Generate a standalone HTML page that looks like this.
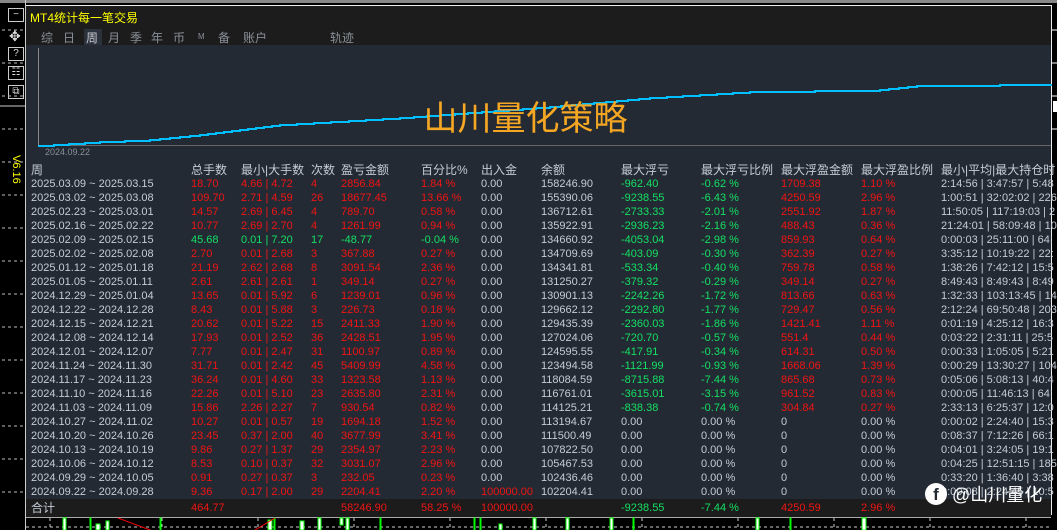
<!DOCTYPE html><html><head><meta charset="utf-8"><style>
*{margin:0;padding:0;box-sizing:border-box}
body{width:1057px;height:530px;background:#000;position:relative;overflow:hidden;font-family:"Liberation Sans","Noto Sans CJK SC",sans-serif;font-size:11px;color:#c4ccd6}
.abs{position:absolute}
.r{color:#f01414}.g{color:#14e064}
.row{position:absolute;left:31px;height:14px;line-height:14px;white-space:nowrap}
.row span{position:absolute;top:0}
.ic{position:absolute;left:8px;width:16px;height:14px;border:1px solid #ccc;color:#ddd;font-size:10px;text-align:center;line-height:12px}
.tab{position:absolute;top:29px;font-size:12px;color:#8a9098}
</style></head><body>
<div class="abs" style="left:0;top:0;width:1057px;height:3px;background:#888"></div>
<div class="abs" style="left:25px;top:0;width:1px;height:530px;background:#ccc"></div>
<div class="abs" style="left:26px;top:5px;width:1025px;height:1px;background:#eee"></div>
<div class="abs" style="left:1051px;top:5px;width:1px;height:510px;background:#eee"></div>
<div class="abs" style="left:26px;top:6px;width:1025px;height:39px;background:#1c1c1c"></div>
<div class="abs" style="left:26px;top:45px;width:1025px;height:454px;background:#242a33"></div>
<div class="abs" style="left:26px;top:499px;width:1025px;height:18px;background:#1c1c1c"></div>
<div class="abs" style="left:26px;top:517px;width:1025px;height:1px;background:#aaa"></div>
<div class="abs" style="left:30px;top:9px;color:#ffff00;font-size:12px">MT4统计每一笔交易</div>
<div class="abs" style="left:84px;top:29px;width:18px;height:16px;background:#2c323c"></div>
<span class="tab" style="left:41px">综</span><span class="tab" style="left:63px">日</span><span class="tab" style="left:86px;color:#c8ccd2">周</span><span class="tab" style="left:108px">月</span><span class="tab" style="left:130px">季</span><span class="tab" style="left:151px">年</span><span class="tab" style="left:173px">币</span><span class="tab" style="left:198px;font-size:8px;top:32px">M</span><span class="tab" style="left:218px">备</span><span class="tab" style="left:243px">账户</span><span class="tab" style="left:330px">轨迹</span>
<div class="ic" style="top:8px">−</div>
<div class="abs" style="left:9px;top:28px;color:#ddd;font-size:14px">✥</div>
<div class="ic" style="top:47px">?</div>
<div class="ic" style="top:66px">☷</div>
<div class="ic" style="top:85px">⧉</div>
<div class="abs" style="top:155px;color:#ffff00;font-size:11px;transform:rotate(90deg);transform-origin:left top;left:22px">V6.16</div>
<svg class="abs" style="left:0;top:0" width="1057" height="530">
<g stroke="#bbb" stroke-dasharray="3,3"><line x1="2" y1="30" x2="24" y2="30"/><line x1="2" y1="63" x2="24" y2="63"/><line x1="2" y1="96" x2="24" y2="96"/><line x1="2" y1="129" x2="24" y2="129"/><line x1="2" y1="162" x2="24" y2="162"/><line x1="2" y1="195" x2="24" y2="195"/><line x1="2" y1="228" x2="24" y2="228"/><line x1="2" y1="261" x2="24" y2="261"/><line x1="2" y1="294" x2="24" y2="294"/><line x1="2" y1="327" x2="24" y2="327"/><line x1="2" y1="360" x2="24" y2="360"/><line x1="2" y1="393" x2="24" y2="393"/><line x1="2" y1="426" x2="24" y2="426"/><line x1="2" y1="459" x2="24" y2="459"/><line x1="2" y1="492" x2="24" y2="492"/></g>
<line x1="0" y1="106" x2="25" y2="106" stroke="#ccc"/>
<line x1="38.5" y1="48" x2="38.5" y2="146" stroke="#888"/>
<line x1="38" y1="145.5" x2="1051" y2="145.5" stroke="#666"/>
<polyline id="eq" fill="none" stroke="#00bfff" stroke-width="2" points=""/>
<g stroke="#fff"><line x1="1051" y1="30" x2="1057" y2="30"/><line x1="1051" y1="63" x2="1057" y2="63"/><line x1="1051" y1="96" x2="1057" y2="96"/><line x1="1051" y1="129" x2="1057" y2="129"/></g>
<rect x="1053" y="101" width="4" height="11" fill="#fff"/>
<g stroke="#ccc" stroke-dasharray="3,3"><line x1="26" y1="527" x2="1051" y2="527"/><line x1="50" y1="518" x2="50" y2="530"/><line x1="162" y1="518" x2="162" y2="530"/><line x1="258" y1="518" x2="258" y2="530"/><line x1="354" y1="518" x2="354" y2="530"/><line x1="450" y1="518" x2="450" y2="530"/><line x1="546" y1="518" x2="546" y2="530"/><line x1="642" y1="518" x2="642" y2="530"/><line x1="738" y1="518" x2="738" y2="530"/><line x1="834" y1="518" x2="834" y2="530"/><line x1="930" y1="518" x2="930" y2="530"/><line x1="1026" y1="518" x2="1026" y2="530"/></g>
<g fill="#fff" stroke="#0f0"><rect x="63" y="518" width="3" height="12"/><rect x="90" y="518" width="1" height="12"/><rect x="96" y="524" width="4" height="6"/><rect x="106" y="521" width="3" height="9"/><rect x="160" y="518" width="1" height="12"/><rect x="268" y="520" width="4" height="10"/><rect x="274" y="518" width="1" height="12"/><rect x="300" y="521" width="4" height="9"/><rect x="318" y="518" width="3" height="12"/><rect x="340" y="518" width="3" height="7"/><rect x="346" y="518" width="3" height="12"/><rect x="380" y="518" width="1" height="12"/><rect x="474" y="518" width="1" height="12"/><rect x="480" y="518" width="1" height="12"/><rect x="499" y="524" width="3" height="6"/><rect x="533" y="518" width="3" height="12"/><rect x="566" y="518" width="3" height="12"/><rect x="610" y="518" width="3" height="12"/><rect x="633" y="518" width="1" height="12"/><rect x="756" y="518" width="3" height="12"/><rect x="790" y="518" width="1" height="12"/><rect x="862" y="518" width="4" height="12"/></g>
<polyline fill="none" stroke="#f00" points="118,518 150,530"/>
<polyline fill="none" stroke="#f00" points="255,530 275,518"/>
</svg>
<div class="abs" style="left:0;top:99px;width:1051px;text-align:center;color:#f5a623;font-size:34px;line-height:40px">山川量化策略</div>
<div class="abs" style="left:45px;top:147px;font-size:9px;color:#8a9098">2024.09.22</div>
<div id="t"></div>
<div class="abs" style="left:925px;top:483px;width:22px;height:22px;border-radius:11px;background:#fff;color:#242a33;font-weight:bold;font-size:17px;text-align:center;line-height:24px">f</div>
<div class="abs" style="left:952px;top:481px;color:#fff;font-size:18px">@山川量化</div>
<script>
var C=[[38,146],[100,142],[150,140],[200,135],[280,125],[400,118],[550,107],[650,98],[750,92],[880,90],[917,86],[1000,85],[1051,84]];
var P=[],cy=146;P.push("38,146");
for(var i=1;i<C.length;i++){var a=C[i-1],b=C[i],n=a[1]-b[1];if(n<=0){P.push(b[0]+","+cy);continue}
for(var k=1;k<=n;k++){var x=Math.round(a[0]+(b[0]-a[0])*k/n);P.push(x+","+cy);cy--;P.push(x+","+cy)}}
P.push("1051,"+cy);
document.getElementById("eq").setAttribute("points",P.join(" "));
var X=[0,160,210,280,310,390,450,510,590,670,750,830,910];
var H=["周","总手数","最小|大手数","次数","盈亏金额","百分比%","出入金","余额","最大浮亏","最大浮亏比例","最大浮盈金额","最大浮盈比例","最小|平均|最大持仓时"];
var D=`2025.03.09 ~ 2025.03.15|18.70|4.66 | 4.72|4|2856.84|1.84 %|0.00|158246.90|-962.40|-0.62 %|1709.38|1.10 %|2:14:56 | 3:47:57 | 5:48
2025.03.02 ~ 2025.03.08|109.70|2.71 | 4.59|26|18677.45|13.66 %|0.00|155390.06|-9238.55|-6.43 %|4250.59|2.96 %|1:00:51 | 32:02:02 | 226
2025.02.23 ~ 2025.03.01|14.57|2.69 | 6.45|4|789.70|0.58 %|0.00|136712.61|-2733.33|-2.01 %|2551.92|1.87 %|11:50:05 | 117:19:03 | 2
2025.02.16 ~ 2025.02.22|10.77|2.69 | 2.70|4|1261.99|0.94 %|0.00|135922.91|-2936.23|-2.16 %|488.43|0.36 %|21:24:01 | 58:09:48 | 10
2025.02.09 ~ 2025.02.15|45.68|0.01 | 7.20|17|-48.77|-0.04 %|0.00|134660.92|-4053.04|-2.98 %|859.93|0.64 %|0:00:03 | 25:11:00 | 64:
2025.02.02 ~ 2025.02.08|2.70|0.01 | 2.68|3|367.88|0.27 %|0.00|134709.69|-403.09|-0.30 %|362.39|0.27 %|3:35:12 | 10:19:22 | 22:
2025.01.12 ~ 2025.01.18|21.19|2.62 | 2.68|8|3091.54|2.36 %|0.00|134341.81|-533.34|-0.40 %|759.78|0.58 %|1:38:26 | 7:42:12 | 15:5
2025.01.05 ~ 2025.01.11|2.61|2.61 | 2.61|1|349.14|0.27 %|0.00|131250.27|-379.32|-0.29 %|349.14|0.27 %|8:49:43 | 8:49:43 | 8:49
2024.12.29 ~ 2025.01.04|13.65|0.01 | 5.92|6|1239.01|0.96 %|0.00|130901.13|-2242.26|-1.72 %|813.66|0.63 %|1:32:33 | 103:13:45 | 14
2024.12.22 ~ 2024.12.28|8.43|0.01 | 5.88|3|226.73|0.18 %|0.00|129662.12|-2292.80|-1.77 %|729.47|0.56 %|2:12:24 | 69:50:48 | 203
2024.12.15 ~ 2024.12.21|20.62|0.01 | 5.22|15|2411.33|1.90 %|0.00|129435.39|-2360.03|-1.86 %|1421.41|1.11 %|0:01:19 | 4:25:12 | 16:3
2024.12.08 ~ 2024.12.14|17.93|0.01 | 2.52|36|2428.51|1.95 %|0.00|127024.06|-720.70|-0.57 %|551.4|0.44 %|0:03:22 | 2:31:11 | 25:5
2024.12.01 ~ 2024.12.07|7.77|0.01 | 2.47|31|1100.97|0.89 %|0.00|124595.55|-417.91|-0.34 %|614.31|0.50 %|0:00:33 | 1:05:05 | 5:21
2024.11.24 ~ 2024.11.30|31.71|0.01 | 2.42|45|5409.99|4.58 %|0.00|123494.58|-1121.99|-0.93 %|1668.06|1.39 %|0:00:29 | 13:30:27 | 104
2024.11.17 ~ 2024.11.23|36.24|0.01 | 4.60|33|1323.58|1.13 %|0.00|118084.59|-8715.88|-7.44 %|865.68|0.73 %|0:05:06 | 5:08:13 | 40:4
2024.11.10 ~ 2024.11.16|22.26|0.01 | 5.10|23|2635.80|2.31 %|0.00|116761.01|-3615.01|-3.15 %|961.52|0.83 %|0:00:05 | 11:46:13 | 64:
2024.11.03 ~ 2024.11.09|15.86|2.26 | 2.27|7|930.54|0.82 %|0.00|114125.21|-838.38|-0.74 %|304.84|0.27 %|2:33:13 | 6:25:37 | 12:0
2024.10.27 ~ 2024.11.02|10.27|0.01 | 0.57|19|1694.18|1.52 %|0.00|113194.67|0.00|0.00 %|0|0.00 %|0:00:02 | 2:24:40 | 15:3
2024.10.20 ~ 2024.10.26|23.45|0.37 | 2.00|40|3677.99|3.41 %|0.00|111500.49|0.00|0.00 %|0|0.00 %|0:08:37 | 7:12:26 | 66:1
2024.10.13 ~ 2024.10.19|9.86|0.27 | 1.37|29|2354.97|2.23 %|0.00|107822.50|0.00|0.00 %|0|0.00 %|0:04:01 | 3:24:05 | 19:1
2024.10.06 ~ 2024.10.12|8.53|0.10 | 0.37|32|3031.07|2.96 %|0.00|105467.53|0.00|0.00 %|0|0.00 %|0:04:25 | 12:51:15 | 185
2024.09.29 ~ 2024.10.05|0.91|0.27 | 0.37|3|232.05|0.23 %|0.00|102436.46|0.00|0.00 %|0|0.00 %|0:33:20 | 1:36:40 | 3:38
2024.09.22 ~ 2024.09.28|9.36|0.17 | 2.00|29|2204.41|2.20 %|100000.00|102204.41|0.00|0.00 %|0|0.00 %|0:00:08 | 2:24:45 | 10:5`.split("\n");
var h='<div class="row" style="top:163px">';H.forEach((t,i)=>h+='<span style="left:'+X[i]+'px;font-size:12px">'+t+'</span>');h+='</div>';
D.forEach((l,r)=>{var c=l.split("|").map(s=>s.trim());var f=[c[0],c[1],c[2]+" | "+c[3],c[4],c[5],c[6],c[7],c[8],c[9],c[10],c[11],c[12],c[13]+" | "+c[14]+" | "+c[15]];
var grn=c[5][0]=="-",zero=c[11]=="0";h+='<div class="row" style="top:'+(177+r*14)+'px">';
f.forEach((t,i)=>{var cl="";if(i>=1&&i<=5)cl=grn?"g":"r";if(i==6&&t!="0.00")cl="r";if(i==8||i==9)cl=zero?"":"g";if(i==10||i==11)cl=zero?"":"r";h+='<span class="'+cl+'" style="left:'+X[i]+'px">'+t+'</span>'});h+='</div>'});
h+='<div class="row" style="top:501px"><span style="font-size:12px">合计</span><span class="r" style="left:160px">464.77</span><span class="r" style="left:310px">58246.90</span><span class="r" style="left:390px">58.25 %</span><span class="r" style="left:450px">100000.00</span><span class="g" style="left:590px">-9238.55</span><span class="g" style="left:670px">-7.44 %</span><span class="r" style="left:750px">4250.59</span><span class="r" style="left:830px">2.96 %</span></div>';
document.getElementById("t").innerHTML=h;
</script>
</body></html>
